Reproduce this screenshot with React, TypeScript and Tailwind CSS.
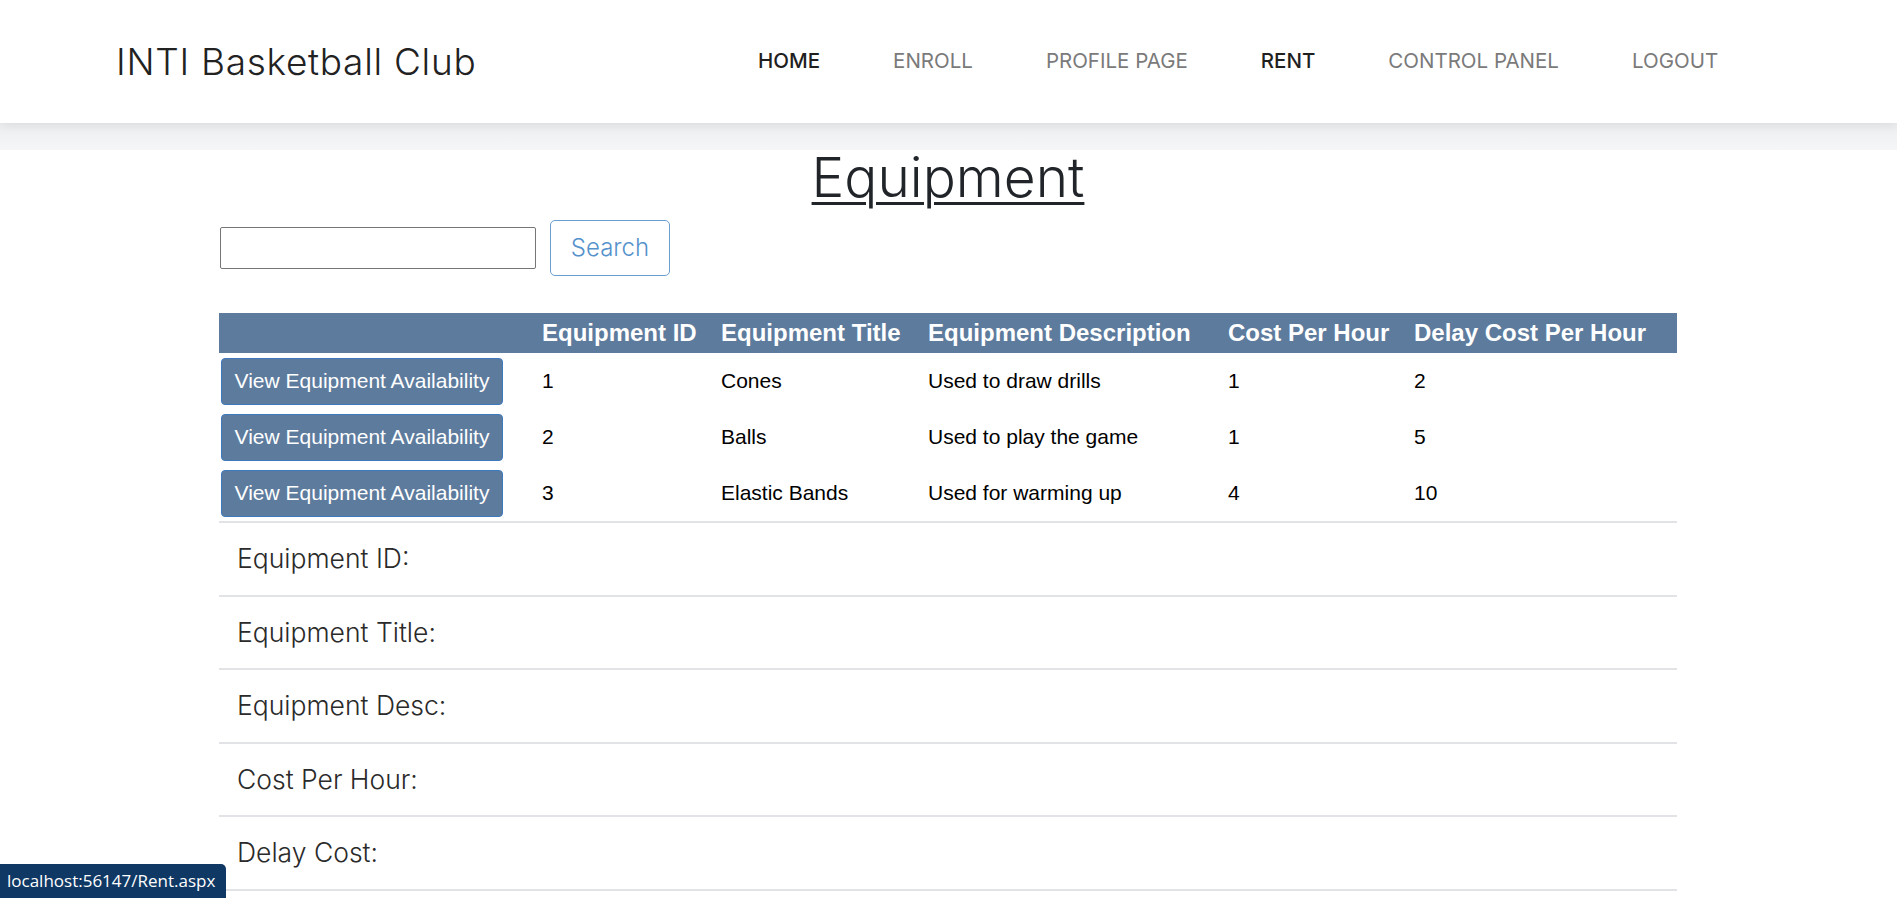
import React from "react";

const rows = [
  { id: "1", title: "Cones", desc: "Used to draw drills", cost: "1", delay: "2" },
  { id: "2", title: "Balls", desc: "Used to play the game", cost: "1", delay: "5" },
  { id: "3", title: "Elastic Bands", desc: "Used for warming up", cost: "4", delay: "10" },
];

const navItems = [
  { label: "HOME", dark: true },
  { label: "ENROLL", dark: false },
  { label: "PROFILE PAGE", dark: false },
  { label: "RENT", dark: true },
  { label: "CONTROL PANEL", dark: false },
  { label: "LOGOUT", dark: false },
];

const details = ["Equipment ID:", "Equipment Title:", "Equipment Desc:", "Cost Per Hour:", "Delay Cost:"];

const cols = "grid grid-cols-[323px_179px_207px_300px_186px_263px]";

export default function App() {
  return (
    <div className="min-h-screen bg-white font-['Inter','Open_Sans',sans-serif] text-[#212529]">
      <header className="relative z-10 flex h-[123px] items-center bg-white pl-[116px] shadow-[0_3px_10px_rgba(0,0,0,0.07)]">
        <div className="w-[642px] text-[37px] font-light tracking-[0.7px] text-[#222]">INTI Basketball Club</div>
        <nav className="flex gap-[73px] text-[20.5px]">
          {navItems.map((n) => (
            <span key={n.label} className={n.dark ? "font-medium text-[#1f1f1f]" : "text-[#7a7a7a]"}>
              {n.label}
            </span>
          ))}
        </nav>
      </header>
      <div className="h-[27px] bg-gradient-to-b from-[#eceef0] to-[#f5f6f8]" />

      <main className="ml-[219px] w-[1458px]">
        <h1 className="text-center text-[55px] font-light leading-[54px] text-[#212529] underline decoration-[3px] underline-offset-[5px]">
          Equipment
        </h1>

        <div className="mt-[16px] flex items-center">
          <input className="ml-[1px] h-[42px] w-[316px] rounded-[2px] border border-[#767676] bg-white outline-none" />
          <button className="ml-[14px] h-[56px] w-[120px] rounded-[5px] border border-[#6a9fd0] bg-white text-[24px] font-light text-[#5592cc]">
            Search
          </button>
        </div>

        <div className="mt-[37px] font-['Liberation_Sans',Arial,sans-serif]">
          <div className={`${cols} h-[40px] items-center bg-[#5d7b9d] text-[24px] font-bold text-white`}>
            <div />
            <div>Equipment ID</div>
            <div>Equipment Title</div>
            <div>Equipment Description</div>
            <div>Cost Per Hour</div>
            <div>Delay Cost Per Hour</div>
          </div>
          {rows.map((r) => (
            <div key={r.id} className={`${cols} h-[56px] items-center text-[21px] text-black`}>
              <div className="pl-[2px]">
                <button className="h-[47px] w-[282px] rounded-[4px] border border-[#3f79bd] bg-[#5d7b9d] text-[21px] text-white">
                  View Equipment Availability
                </button>
              </div>
              <div>{r.id}</div>
              <div>{r.title}</div>
              <div>{r.desc}</div>
              <div>{r.cost}</div>
              <div>{r.delay}</div>
            </div>
          ))}
        </div>

        <div className="border-t-2 border-[#e1e3e6]">
          {details.map((d) => (
            <div key={d} className="flex h-[73.6px] items-center border-b-2 border-[#e1e3e6] pl-[18px] text-[26.5px] font-light text-[#2a2a2a]">
              {d}
            </div>
          ))}
        </div>
      </main>

      <div className="fixed bottom-0 left-0 flex h-[34px] w-[226px] items-center rounded-tr-[5px] bg-[#0f3864] pl-[7px] font-['Open_Sans',sans-serif] text-[17px] text-white">
        localhost:56147/Rent.aspx
      </div>
    </div>
  );
}
